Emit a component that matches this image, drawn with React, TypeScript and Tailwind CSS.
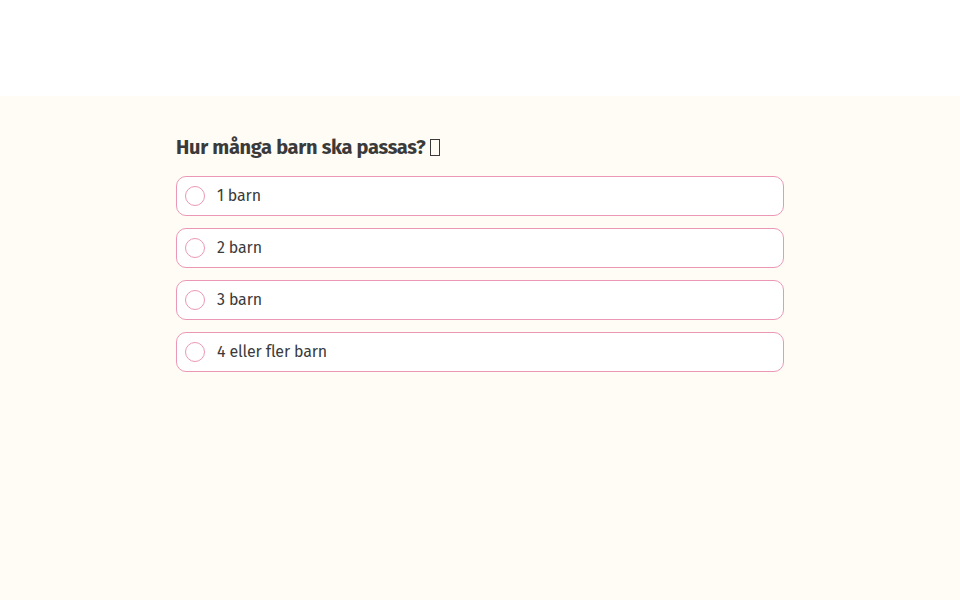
import React from "react";

const options = ["1 barn", "2 barn", "3 barn", "4 eller fler barn"];

export default function App() {
  return (
    <div
      className="min-h-[600px] bg-white"
      style={{ fontFamily: '"Fira Sans", "Noto Sans", "Open Sans", sans-serif' }}
    >
      <div className="h-[96px] bg-white" />
      <div className="min-h-[504px] bg-[#fffbf5] pt-[38px]">
        <div className="mx-auto w-[608px]">
          <h2 className="flex items-center text-[20px] font-bold leading-[26px] text-[#3a3a3a] tracking-[-0.3px]">
            <span>Hur många barn ska passas?</span>
            <span className="ml-[5px] inline-block h-[17px] w-[10px] border border-[#3a3a3a]" />
          </h2>
          <div className="mt-[16px] flex flex-col gap-[12px]">
            {options.map((o) => (
              <label
                key={o}
                className="flex h-[40px] items-center rounded-[10px] border border-[#eb98b6] bg-white pl-[8px]"
              >
                <span className="h-[20px] w-[20px] rounded-full border border-[#eb98b6] bg-white" />
                <span className="ml-[12px] text-[16px] tracking-[-0.15px] text-[#3b3b3b]">{o}</span>
              </label>
            ))}
          </div>
        </div>
      </div>
    </div>
  );
}
